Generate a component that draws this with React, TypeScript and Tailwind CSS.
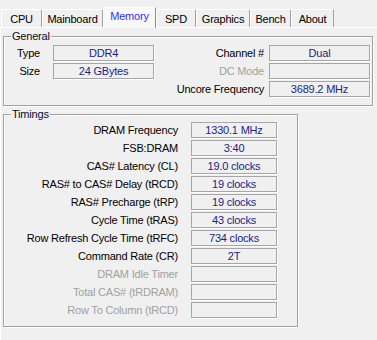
import React from 'react';

const tabs = [
  { name: 'CPU', w: 'w-[41px]' },
  { name: 'Mainboard', w: 'w-[61px]' },
  { name: 'Memory', w: 'w-[53px]', active: true },
  { name: 'SPD', w: 'w-[40px]' },
  { name: 'Graphics', w: 'w-[54px]' },
  { name: 'Bench', w: 'w-[41px]' },
  { name: 'About', w: 'w-[43px]' },
];

const timings = [
  { label: 'DRAM Frequency', value: '1330.1 MHz' },
  { label: 'FSB:DRAM', value: '3:40' },
  { label: 'CAS# Latency (CL)', value: '19.0 clocks' },
  { label: 'RAS# to CAS# Delay (tRCD)', value: '19 clocks' },
  { label: 'RAS# Precharge (tRP)', value: '19 clocks' },
  { label: 'Cycle Time (tRAS)', value: '43 clocks' },
  { label: 'Row Refresh Cycle Time (tRFC)', value: '734 clocks' },
  { label: 'Command Rate (CR)', value: '2T' },
  { label: 'DRAM Idle Timer', value: '', disabled: true },
  { label: 'Total CAS# (tRDRAM)', value: '', disabled: true },
  { label: 'Row To Column (tRCD)', value: '', disabled: true },
];

const Field: React.FC<{ value?: string; className?: string }> = ({ value, className }) => (
  <div
    className={`h-[16px] border border-[#a6a6a6] shadow-[1px_1px_0_#ffffff] flex items-center justify-center text-[#1c1c8c] leading-none ${className ?? ''}`}
  >
    {value}
  </div>
);

const Group: React.FC<{ title: string; className?: string; children: React.ReactNode }> = ({ title, className, children }) => (
  <div
    className={`relative border border-[#a0a0a0] shadow-[inset_1px_1px_0_#ffffff,1px_1px_0_#ffffff] ${className ?? ''}`}
  >
    <span className="absolute -top-[7px] left-[7px] px-[1px] bg-[#f0f0f0] leading-[13px] text-[#0a0a2a]">
      {title}
    </span>
    {children}
  </div>
);

export default function App() {
  return (
    <div
      className="w-[377px] h-[340px] bg-[#f0f0f0] text-[11px] tracking-[-0.2px] text-black overflow-hidden"
      style={{ fontFamily: '"Liberation Sans", Arial, sans-serif' }}
    >
      {/* tab strip */}
      <div className="h-[27px] flex items-end pl-[1px]">
        {tabs.map((t) =>
          t.active ? (
            <div
              key={t.name}
              className={`${t.w} h-[21px] -mb-px relative z-10 bg-[#f8f8f8] border-l border-t border-white border-r border-r-[#8a8a8a] flex items-center justify-center pb-[3px] text-[#3030ff] rounded-t-[1px]`}
            >
              {t.name}
            </div>
          ) : (
            <div
              key={t.name}
              className={`${t.w} h-[18px] bg-[#f0f0f0] border-l border-t border-white border-r border-r-[#a0a0a0] flex items-center justify-center pt-[1px] rounded-t-[1px]`}
            >
              {t.name}
            </div>
          )
        )}
      </div>

      {/* panel */}
      <div className="border-t border-l border-white h-[313px] pl-[2px] pt-[8px]">
        <Group title="General" className="w-[370px]">
          <div className="grid grid-cols-[49px_101px_115px_101px] gap-y-[2px] pt-[8px] pb-[8px]">
            <div className="h-[16px] flex items-center justify-end pr-[13px]">Type</div>
            <Field value="DDR4" />
            <div className="h-[16px] flex items-center justify-end pr-[5px]">Channel #</div>
            <Field value="Dual" />

            <div className="h-[16px] flex items-center justify-end pr-[13px]">Size</div>
            <Field value="24 GBytes" />
            <div className="h-[16px] flex items-center justify-end pr-[5px] text-[#a0a0a0]">DC Mode</div>
            <Field />

            <div />
            <div />
            <div className="h-[16px] flex items-center justify-end pr-[5px]">Uncore Frequency</div>
            <Field value="3689.2 MHz" />
          </div>
        </Group>

        <Group title="Timings" className="w-[295px] mt-[8px]">
          <div className="grid grid-cols-[187px_86px] gap-y-[2px] pt-[7px] pb-[8px]">
            {timings.map((row) => (
              <React.Fragment key={row.label}>
                <div
                  className={`h-[16px] flex items-center justify-end pr-[13px] whitespace-nowrap ${
                    row.disabled ? 'text-[#a0a0a0]' : ''
                  }`}
                >
                  {row.label}
                </div>
                <Field value={row.value} />
              </React.Fragment>
            ))}
          </div>
        </Group>
      </div>
    </div>
  );
}
